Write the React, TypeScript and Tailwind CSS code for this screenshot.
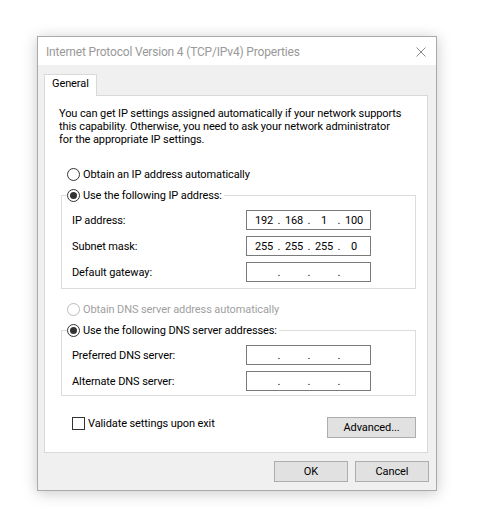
import type { ReactNode } from "react";

const font = "font-['Roboto','Liberation_Sans',sans-serif]";

function Radio({ checked = false, disabled = false }: { checked?: boolean; disabled?: boolean }) {
  return (
    <span
      className={`flex h-[13px] w-[13px] shrink-0 items-center justify-center rounded-full border bg-white ${
        disabled ? "border-[#bcbcbc]" : "border-[#333333]"
      }`}
    >
      {checked && <span className="h-[7px] w-[7px] rounded-full bg-[#333333]" />}
    </span>
  );
}

function RadioRow({ label, checked, disabled }: { label: string; checked?: boolean; disabled?: boolean }) {
  return (
    <div className={`flex h-[16px] items-center gap-[3px] ${disabled ? "text-[#a0a0a0]" : "text-black"}`}>
      <Radio checked={checked} disabled={disabled} />
      <span className="pr-[2px] whitespace-nowrap">{label}</span>
    </div>
  );
}

function IpBox({ parts }: { parts: string[] }) {
  return (
    <div className="flex h-[20px] w-[125px] items-center border border-[#7a7a7a] bg-white pl-[5px] text-black">
      {parts.map((p, i) => (
        <div key={i} className="flex">
          <span className="w-[24px] text-center">{p}</span>
          {i < 3 && <span className="w-[6px] text-center text-black">.</span>}
        </div>
      ))}
    </div>
  );
}

function Field({ label, parts }: { label: string; parts: string[] }) {
  return (
    <div className="flex items-center">
      <span className="w-[174px] whitespace-nowrap">{label}</span>
      <IpBox parts={parts} />
    </div>
  );
}

function Group({ title, children, bottom }: { title: string; children: ReactNode; bottom: string }) {
  return (
    <div className="ml-[16px] mr-[11px]">
      <div className="flex h-[16px]">
        <div className="h-[8px] w-[6px] self-end border-l border-t border-[#dcdcdc]" />
        <RadioRow label={title} checked />
        <div className="h-[8px] flex-1 self-end border-r border-t border-[#dcdcdc]" />
      </div>
      <div className={`flex flex-col gap-[6px] border-x border-b border-[#dcdcdc] pl-[10px] pt-[7px] ${bottom}`}>
        {children}
      </div>
    </div>
  );
}

function Button({ children, width }: { children: ReactNode; width: string }) {
  return (
    <button
      className={`flex h-[21px] items-center justify-center border border-[#adadad] bg-[#e1e1e1] text-black ${width}`}
    >
      {children}
    </button>
  );
}

export default function App() {
  const empty = ["", "", "", ""];
  return (
    <div
      className={`min-h-[527px] bg-white pl-[37px] pt-[36px] text-[11px] leading-[13px] tracking-[-0.1px] ${font}`}
    >
      <div className="w-[400px] border border-[#aaaaaa] shadow-[0_2px_14px_rgba(0,0,0,0.22)]">
        {/* Title bar */}
        <div className="flex h-[28px] items-center justify-between bg-white pl-[8px] pr-[10px] pt-[2px]">
          <span className="text-[12px] tracking-[-0.18px] text-[#999999]">
            Internet Protocol Version 4 (TCP/IPv4) Properties
          </span>
          <svg width="10" height="10" viewBox="0 0 10 10">
            <path d="M0.5 0.5 L9.5 9.5 M9.5 0.5 L0.5 9.5" stroke="#8a8a8a" strokeWidth="1" fill="none" />
          </svg>
        </div>

        {/* Body */}
        <div className="bg-[#f0f0f0] pb-[8px] pl-[6px] pr-[8px] pt-[9px]">
          <div className="flex">
            <div className="relative z-10 -mb-px h-[22px] border-x border-t border-[#d9d9d9] bg-white px-[7px] leading-[17px]">
              General
            </div>
          </div>

          <div className="border border-[#d9d9d9] bg-white pb-[14px]">
            <p className="ml-[14px] mt-[11px] whitespace-nowrap text-black">
              You can get IP settings assigned automatically if your network supports
              <br />
              this capability. Otherwise, you need to ask your network administrator
              <br />
              for the appropriate IP settings.
            </p>

            <div className="ml-[22px] mt-[20px]">
              <RadioRow label="Obtain an IP address automatically" />
            </div>

            <div className="mt-[5px]">
              <Group title="Use the following IP address:" bottom="pb-[6px]">
                <Field label="IP address:" parts={["192", "168", "1", "100"]} />
                <Field label="Subnet mask:" parts={["255", "255", "255", "0"]} />
                <Field label="Default gateway:" parts={empty} />
              </Group>
            </div>

            <div className="ml-[22px] mt-[12px]">
              <RadioRow label="Obtain DNS server address automatically" disabled />
            </div>

            <div className="mt-[5px]">
              <Group title="Use the following DNS server addresses:" bottom="pb-[4px]">
                <Field label="Preferred DNS server:" parts={empty} />
                <Field label="Alternate DNS server:" parts={empty} />
              </Group>
            </div>

            <div className="ml-[27px] mr-[11px] mt-[19px] flex items-start justify-between">
              <div className="flex h-[16px] items-center gap-[3px] text-black">
                <span className="h-[13px] w-[13px] border border-[#333333] bg-white" />
                <span>Validate settings upon exit</span>
              </div>
              <div className="mt-[2px]">
                <Button width="w-[89px]">Advanced...</Button>
              </div>
            </div>
          </div>

          <div className="-mr-px mt-[8px] flex justify-end gap-[7px]">
            <Button width="w-[74px]">OK</Button>
            <Button width="w-[74px]">Cancel</Button>
          </div>
        </div>
      </div>
    </div>
  );
}
